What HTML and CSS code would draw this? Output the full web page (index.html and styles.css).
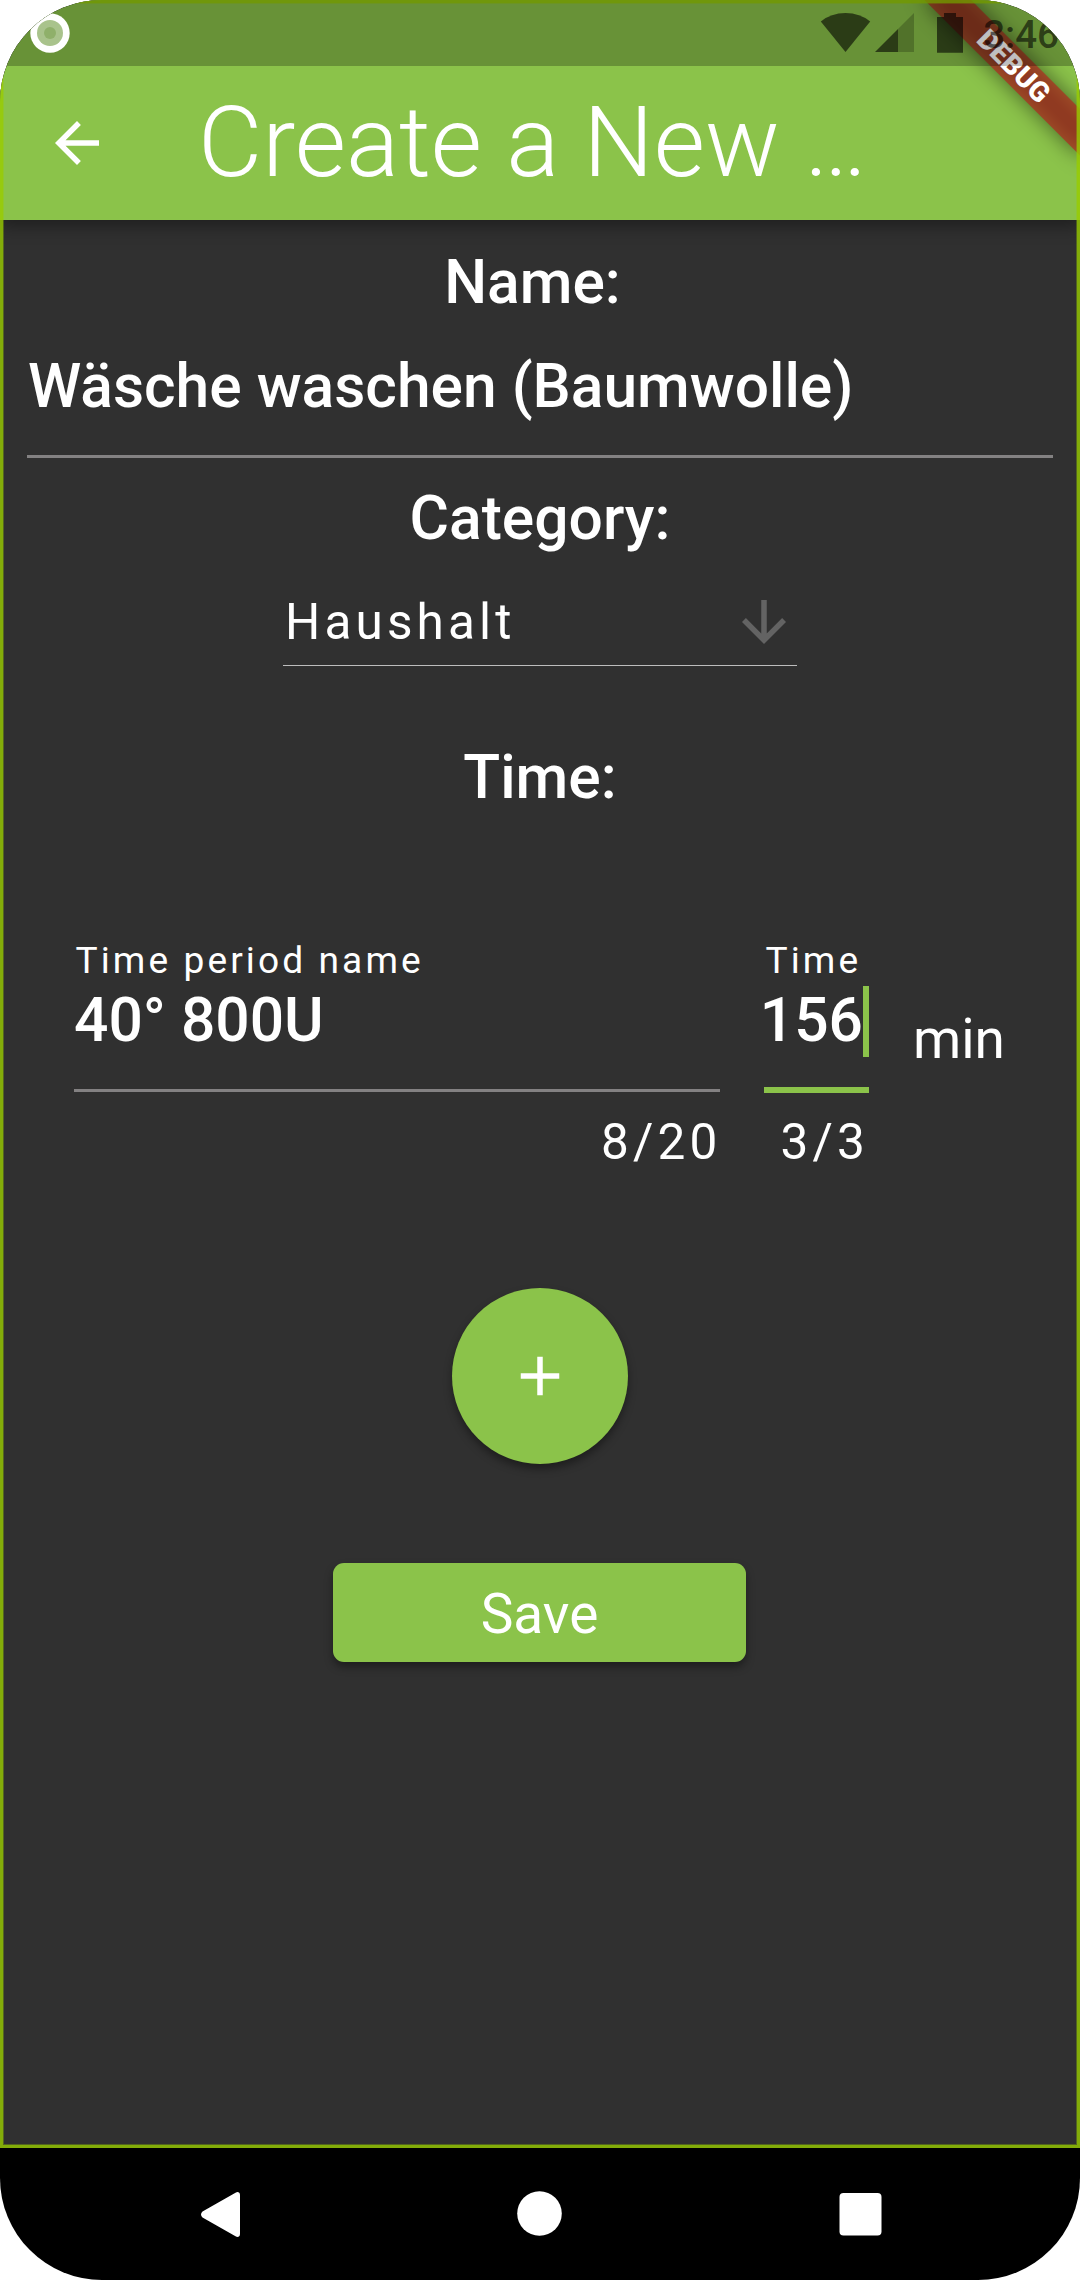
FILE: index.html
```html
<!DOCTYPE html>
<html lang="en">
<head>
<meta charset="utf-8">
<title>Create a New Timer</title>
<link rel="stylesheet" href="styles.css">
</head>
<body>
<div class="phone">
  <main class="app">
    <header class="app-bar">
      <svg class="icon back" viewBox="0 0 24 24"><path d="M20 11H7.83l5.59-5.59L12 4l-8 8 8 8 1.41-1.41L7.83 13H20v-2z"/></svg>
      <h1 class="title">Create a New …</h1>
    </header>
    <form class="form">
      <h2 class="heading name-heading">Name: </h2>
      <div class="name-field">Wäsche waschen (Baumwolle)</div>
      <h2 class="heading category-heading">Category:</h2>
      <div class="select">
        <span class="spaced">Haushalt</span>
        <svg class="icon arrow" viewBox="0 0 24 24"><path d="M20 12l-1.41-1.41L13 16.17V4h-2v12.17l-5.58-5.59L4 12l8 8 8-8z"/></svg>
      </div>
      <h2 class="heading time-heading">Time:</h2>
      <div class="period">
        <div class="field period-name">
          <div class="label">Time period name</div>
          <div class="value">40° 800U</div>
          <div class="counter spaced">8/20</div>
        </div>
        <div class="field period-time">
          <div class="label">Time</div>
          <div class="value focused">156<span class="cursor"></span></div>
          <div class="counter spaced">3/3</div>
        </div>
        <div class="unit">min</div>
      </div>
      <div class="fab"><svg class="icon" viewBox="0 0 24 24"><path d="M19 13h-6v6h-2v-6H5v-2h6V5h2v6h6v2z"/></svg></div>
      <div class="save">Save</div>
    </form>
    <svg class="debug" viewBox="0 0 240 240">
      <g transform="translate(240 0) rotate(45)">
        <rect class="debug-shadow" x="-110" y="77" width="220" height="33"/>
        <rect class="debug-band" x="-110" y="77" width="220" height="33"/>
        <text class="debug-text" x="0" y="103.2">DEBUG</text>
      </g>
    </svg>
    <div class="outline"></div>
  </main>
  <nav class="nav">
    <svg viewBox="0 0 1080 132">
      <path d="M202.500 63.500L235.500 44.800Q237.500 43.500 239 44.500Q240 45.300 240 47V86Q240 87.800 239 88.500Q237.500 89.500 235.500 88.300L202.500 69.500Q199.500 66.500 202.500 63.500Z"/>
      <circle cx="539.500" cy="65.500" r="22.300"/>
      <rect x="839.500" y="45" width="42" height="42.500" rx="4"/>
    </svg>
  </nav>
  <div class="status">
    <svg viewBox="0 0 1080 66">
      <circle cx="50" cy="33" r="19.700" fill="#fff"/>
      <circle cx="50" cy="33" r="13" fill="#a9c38c"/>
      <circle cx="50" cy="33" r="6" fill="#8fb06a"/>
      <g fill="#000" fill-opacity=".59">
        <path d="M845.500 52L820.800 21.500Q831 13 845.500 13T870.200 21.500Z"/>
        <path d="M875 52L898 29V52Z"/>
        <path d="M898 29L914 13V52H898Z" fill-opacity=".22"/>
        <path d="M937 17H944V13H956V17H963V52.800H937Z"/>
      </g>
    </svg>
    <span class="clock">3:46</span>
  </div>
</div>
</body>
</html>
```
FILE: styles.css
```css
* { box-sizing: border-box; }

body {
  margin: 0;
  background: #fff;
  font-family: Roboto, "Liberation Sans", sans-serif;
  color: #fff;
}

.phone {
  position: relative;
  display: flex;
  flex-direction: column;
  width: 1080px;
  height: 2280px;
  overflow: hidden;
  border-radius: 102px;
  background: #000;
}

.app {
  position: relative;
  height: 2148px;
  overflow: hidden;
  background: #303030;
}

.app-bar {
  display: flex;
  align-items: center;
  height: 220px;
  padding: 66px 44px 0;
  background: #8bc34a;
  box-shadow: 0 6px 16px rgba(0, 0, 0, .38);
}

.icon {
  width: 66px;
  height: 66px;
  fill: #fff;
}

.title {
  margin: -2px 0 0 88px;
  font-size: 99px;
  font-weight: 300;
  line-height: 116px;
  white-space: pre;
}

.form {
  display: flex;
  flex-direction: column;
  padding: 27px 27px 0;
}

.heading {
  margin: 0;
  font-size: 60.5px;
  font-weight: 500;
  line-height: 72px;
  text-align: center;
}

.name-heading { white-space: pre; }

.name-field {
  height: 107px;
  margin-top: 32px;
  padding-left: 1px;
  border-bottom: 3px solid #838182;
  font-size: 60.5px;
  font-weight: 500;
  line-height: 72px;
}

.category-heading { margin-top: 25px; }

.spaced {
  font-size: 49.5px;
  line-height: 60px;
  letter-spacing: 4.125px;
}

.select {
  display: flex;
  align-items: center;
  justify-content: space-between;
  align-self: center;
  width: 514px;
  height: 88px;
  margin-top: 23px;
  padding: 0 0 0 2px;
  border-bottom: 1px solid #bdbdbd;
}

.arrow { fill: #636363; }

.time-heading { margin-top: 76px; }

.period {
  display: flex;
  align-items: flex-start;
  margin: 125px 47px 0;
}

.period-name { width: 646px; }

.period-time {
  width: 105px;
  margin-left: 44px;
}

.label {
  padding-left: 1.5px;
  font-size: 37.1px;
  line-height: 44px;
  letter-spacing: 3.1px;
  white-space: nowrap;
}

.value {
  height: 107px;
  margin: 2px 0 20px;
  border-bottom: 3px solid #838182;
  font-size: 60.5px;
  font-weight: 500;
  line-height: 72px;
}

.focused {
  display: flex;
  justify-content: flex-end;
  height: 108px;
  margin-bottom: 19px;
  border-bottom: 6px solid #8bc34a;
}

.cursor {
  flex: none;
  width: 6px;
  height: 71px;
  margin-top: 1px;
  background: #8bc34a;
}

.counter { text-align: right; }

.period-name .counter { margin-right: -1.5px; }

.unit {
  margin: 67px 0 0 44px;
  font-size: 55px;
  line-height: 66px;
}

.fab {
  display: flex;
  align-items: center;
  justify-content: center;
  align-self: center;
  width: 176px;
  height: 176px;
  margin-top: 116px;
  border-radius: 50%;
  background: #8bc34a;
  box-shadow: 0 5px 9px rgba(0, 0, 0, .38);
}

.save {
  align-self: center;
  width: 413px;
  height: 99px;
  margin-top: 99px;
  margin-right: 1px;
  border-radius: 11px;
  background: #8bc34a;
  box-shadow: 0 5px 8px rgba(0, 0, 0, .38);
  font-size: 55px;
  line-height: 103px;
  text-align: center;
}

/* diagonal ribbon over the top right corner */
.debug {
  position: absolute;
  top: 0;
  right: 0;
  width: 240px;
  height: 240px;
}

.debug-shadow { fill: rgba(0, 0, 0, .5); filter: blur(10.9px); }
.debug-band { fill: rgba(183, 28, 28, .63); }

.debug-text {
  fill: #fff;
  font-size: 28px;
  font-weight: 900;
  text-anchor: middle;
}

.outline {
  position: absolute;
  inset: 0;
  border: 3px solid rgba(153, 204, 0, .8);
  box-shadow: inset 0 0 0 1px rgba(153, 204, 0, .35);
}

.nav { height: 132px; }

.nav svg {
  display: block;
  width: 1080px;
  height: 132px;
  fill: #fff;
}

/* translucent system bar drawn over the app */
.status {
  position: absolute;
  top: 0;
  left: 0;
  width: 1080px;
  height: 66px;
  background: rgba(0, 0, 0, .25);
}

.status svg {
  display: block;
  width: 1080px;
  height: 66px;
}

.clock {
  position: absolute;
  top: 11px;
  right: 21px;
  color: rgba(0, 0, 0, .59);
  font-size: 38.5px;
  font-weight: 500;
  line-height: 48px;
}
```
